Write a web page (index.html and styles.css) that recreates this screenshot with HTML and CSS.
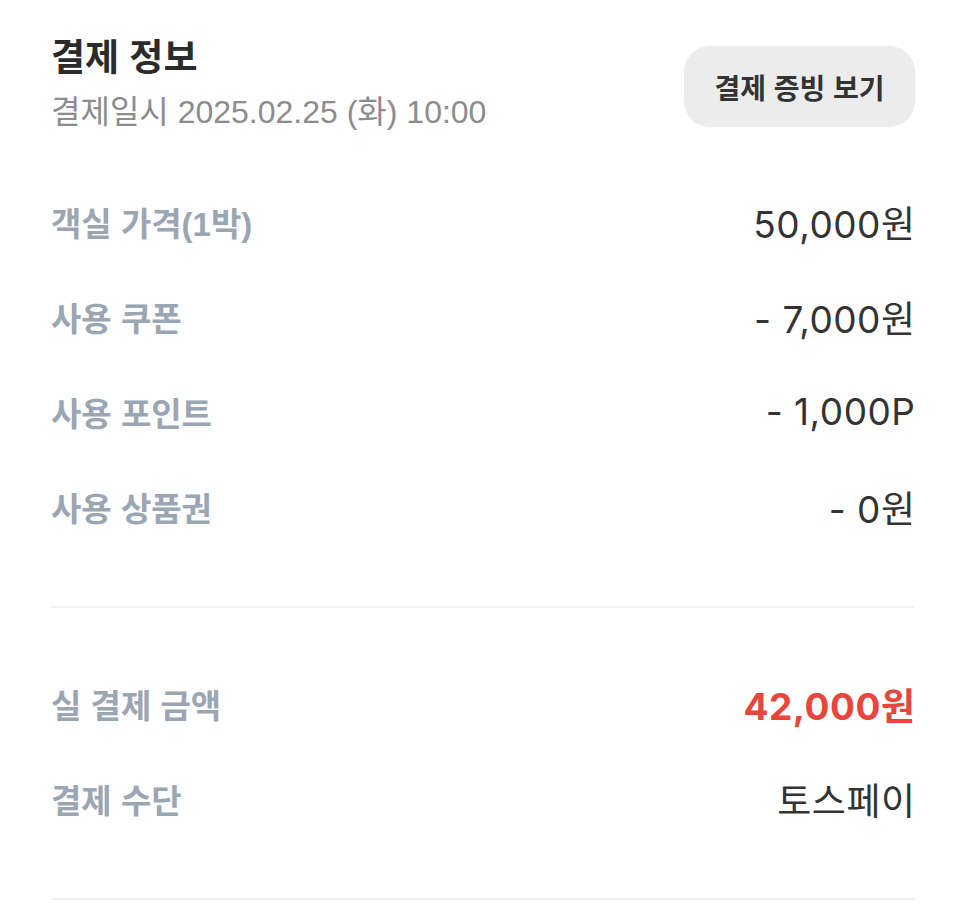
FILE: index.html
```html
<!DOCTYPE html>
<html lang="ko">
<head>
    <meta charset="UTF-8">
    <meta name="viewport" content="width=device-width, initial-scale=1.0">
    <title>결제 정보</title>
    <link rel="stylesheet" href="styles.css">
</head>
<body>
    <div class="payment">
        <div class="payment-header">
            <div>
                <h1 class="title">결제 정보</h1>
                <p class="date">결제일시 2025.02.25 (화) 10:00</p>
            </div>
            <button class="receipt-btn">결제 증빙 보기</button>
        </div>

        <div class="rows">
            <div class="row">
                <span class="label">객실 가격(1박)</span>
                <span class="value">50,000원</span>
            </div>
            <div class="row">
                <span class="label">사용 쿠폰</span>
                <span class="value">- 7,000원</span>
            </div>
            <div class="row">
                <span class="label">사용 포인트</span>
                <span class="value">- 1,000P</span>
            </div>
            <div class="row">
                <span class="label">사용 상품권</span>
                <span class="value">- 0원</span>
            </div>
        </div>

        <hr class="divider">

        <div class="rows rows-total">
            <div class="row">
                <span class="label">실 결제 금액</span>
                <span class="value total">42,000원</span>
            </div>
            <div class="row">
                <span class="label">결제 수단</span>
                <span class="value">토스페이</span>
            </div>
        </div>

        <hr class="divider">
    </div>
</body>
</html>
```

FILE: styles.css
```css
body {
    margin: 0;
    background: #ffffff;
    font-family: 'Liberation Sans', 'Noto Sans CJK KR', sans-serif;
    color: #333333;
}
.payment {
    padding: 46px 51px 0;
}
.payment-header {
    display: flex;
    justify-content: space-between;
    align-items: flex-start;
}
.title {
    margin: -13px 0 0;
    font-size: 37px;
    font-weight: 700;
    color: #2b2b2b;
    line-height: 52px;
}
.date {
    margin: 7px 0 0;
    font-size: 32px;
    color: #8c8c8c;
    line-height: 40px;
}
.receipt-btn {
    height: 81px;
    width: 231px;
    border: none;
    border-radius: 26px;
    background-color: #ececec;
    font-family: 'Noto Sans CJK KR', sans-serif;
    font-size: 28px;
    font-weight: 700;
    color: #333333;
    cursor: pointer;
}
.rows {
    margin-top: 42px;
}
.rows-total {
    margin-top: 48px;
}
.row {
    height: 95px;
    display: flex;
    justify-content: space-between;
    align-items: center;
}
.label {
    font-size: 33px;
    font-weight: 700;
    color: #9aa6b4;
}
.value {
    font-family: 'Inter', 'Noto Sans CJK KR', sans-serif;
    font-size: 37px;
    letter-spacing: 0.5px;
    margin-right: -0.5px;
    color: #333333;
}
.total {
    font-weight: 700;
    color: #e8453c;
}
.divider {
    margin: 52px 0 0;
    border: none;
    height: 2px;
    background-color: #f2f2f2;
}
```
